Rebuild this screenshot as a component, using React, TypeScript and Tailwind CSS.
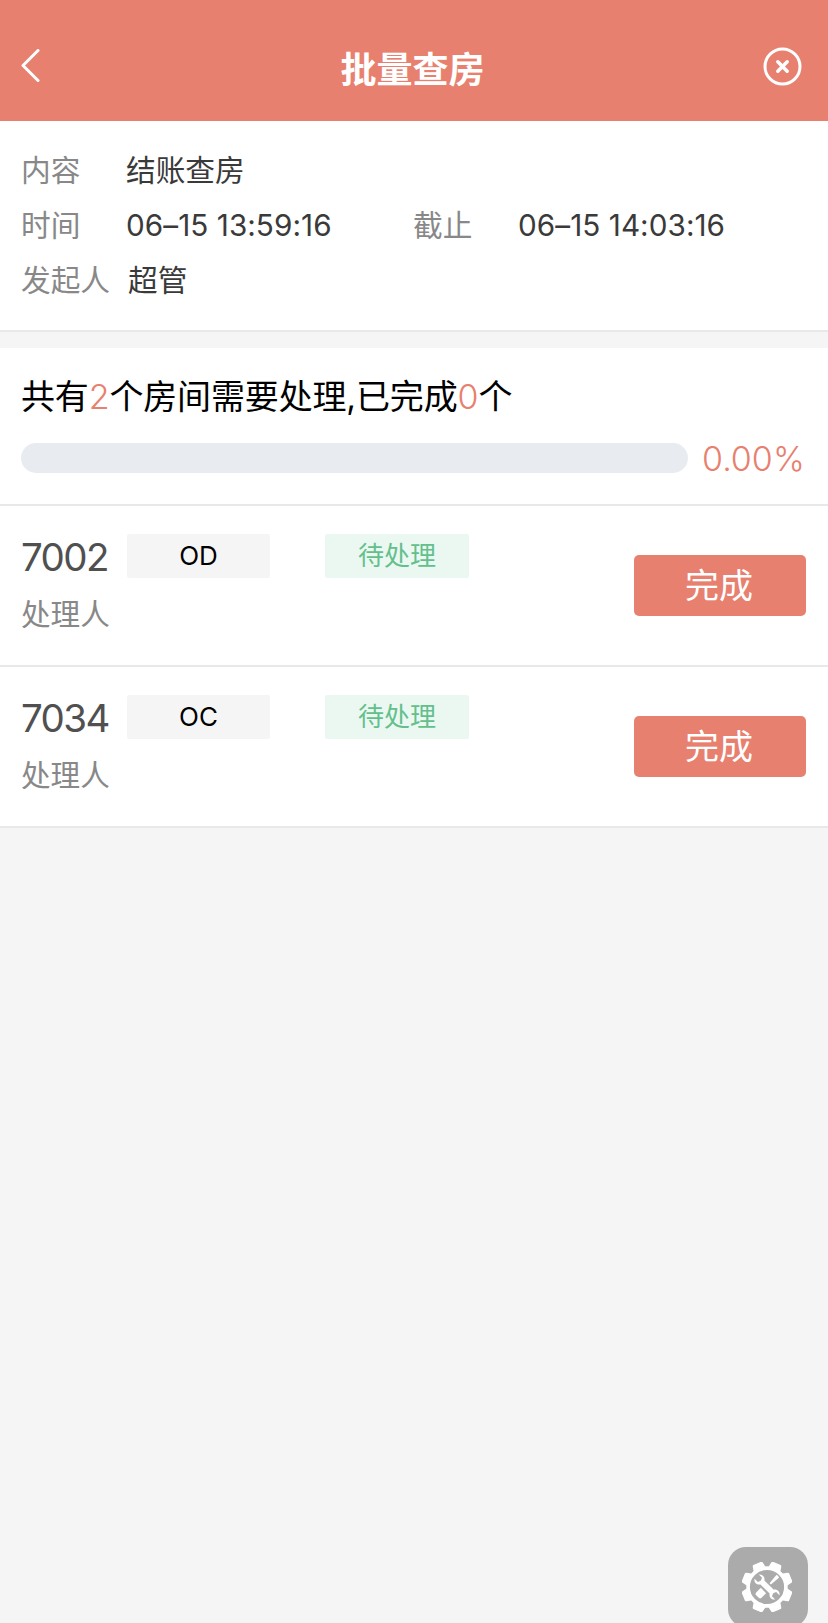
import clsx from "clsx";

type Room = {
  no: string;
  state: string;
  status: string;
};

const rooms: Room[] = [
  { no: "7002", state: "OD", status: "待处理" },
  { no: "7034", state: "OC", status: "待处理" },
];

const done = 0;

function Header() {
  return (
    <header className="flex h-[121px] items-center justify-between bg-[#e8806f] pt-[11px] pr-[26px] pl-[20px]">
      <button className="w-[42px]" aria-label="返回">
        <svg width="20" height="34" viewBox="0 0 20 34" fill="none">
          <path
            d="M18 1.5 3 16.5l15 15"
            stroke="#fff"
            strokeWidth="3"
            strokeLinecap="round"
            strokeLinejoin="round"
          />
        </svg>
      </button>
      <h1 className="pt-[8px] text-[36px] leading-none font-bold text-white">
        批量查房
      </h1>
      <button aria-label="关闭">
        <svg width="39" height="39" viewBox="0 0 39 39" fill="none">
          <circle cx="19.5" cy="19.5" r="17.5" stroke="#fff" strokeWidth="3" />
          <path
            d="m14.8 14.8 9.4 9.4m0-9.4-9.4 9.4"
            stroke="#fff"
            strokeWidth="3.5"
            strokeLinecap="round"
          />
        </svg>
      </button>
    </header>
  );
}

function InfoItem({
  label,
  value,
  className,
}: {
  label: string;
  value: string;
  className?: string;
}) {
  return (
    <div className={clsx("flex h-[55px] items-center", className)}>
      <span className="w-[105px] text-[#888888]">{label}</span>
      <span className="whitespace-nowrap text-[#3a3a3a]">{value}</span>
    </div>
  );
}

function RoomRow({ room }: { room: Room }) {
  return (
    <li className="flex h-[161px] items-start justify-between border-b-2 border-[#e8e8e8] bg-white pr-[22px] pl-[21px]">
      <div>
        <div className="mt-[28px] flex h-[44px] items-center">
          <span className="w-[106px] pt-[2px] text-[38.5px] leading-none tracking-[-1.6px] text-[#505050]">
            {room.no}
          </span>
          <span className="flex h-[44px] w-[143px] items-center justify-center rounded-[2px] bg-[#f5f5f5] pb-[2px] text-[26px] text-black">
            {room.state}
          </span>
          <span className="ml-[55px] flex h-[44px] w-[144px] items-center justify-center rounded-[2px] bg-[#ebf8f2] pb-[1px] text-[26px] text-[#63c08c]">
            {room.status}
          </span>
        </div>
        <div className="mt-[14px] text-[29.6px] leading-[44px] text-[#888888]">
          处理人
        </div>
      </div>
      <button className="mt-[49px] h-[61px] w-[172px] rounded-[5px] bg-[#e8806f] pt-[1px] pr-[2px] text-[34px] leading-none text-white">
        完成
      </button>
    </li>
  );
}

function GearIcon() {
  const teeth = [22.5, 67.5, 112.5, 157.5, 202.5, 247.5, 292.5, 337.5];

  return (
    <svg width="50" height="50" viewBox="-25 -25 50 50">
      {teeth.map((angle) => (
        <path
          key={angle}
          d="M-6.6-18.5-5.4-24.2Q-5.2-25.4-4.2-25.6h8.4q1 .2 1.2 1.4L6.6-18.5Z"
          fill="#fff"
          transform={`rotate(${angle})`}
        />
      ))}
      <circle r="18.9" fill="none" stroke="#fff" strokeWidth="3.6" />
      {/* screwdriver */}
      <g transform="rotate(45)" fill="#fff">
        <path d="M-1.7-15.5h3.4l.1 2-.9 9h-1.8l-.9-9Z" />
        <path d="M-3.8 5h7.6v6.5q0 2-2 2h-3.6q-2 0-2-2Z" />
      </g>
      {/* wrench */}
      <g transform="rotate(-45)">
        <path
          d="M-2.8-6.5C-6.2-8.6-5.8-13-3-14.6v4.6l3 1.2 3-1.2v-4.6C5.8-13 6.2-8.6 2.8-6.5V6.5C6.2 8.6 5.8 13 3 14.6V10L0 8.8l-3 1.2v4.6C-5.8 13-6.2 8.6-2.8 6.5Z"
          fill="#fff"
        />
      </g>
    </svg>
  );
}

export default function App() {
  const percent = (done / rooms.length) * 100;

  return (
    <main className="relative h-[1623px] w-[828px] overflow-hidden bg-[#f5f5f5] font-['Inter','Noto_Sans_CJK_SC',sans-serif]">
      <Header />

      {/* Task info */}
      <section className="h-[211px] border-b-2 border-[#e8e8e8] bg-white px-[21px] pt-[22px] text-[29.7px] leading-none">
        <InfoItem label="内容" value="结账查房" />
        <div className="flex tracking-[0.05px]">
          <InfoItem label="时间" value="06–15 13:59:16" className="w-[392px]" />
          <InfoItem label="截止" value="06–15 14:03:16" />
        </div>
        <InfoItem label="发起人" value="超管" className="gap-[2px]" />
      </section>

      {/* Progress */}
      <section className="mt-4 h-[158px] border-b-2 border-[#e8e8e8] bg-white px-[21px] pt-[24px]">
        <p className="text-[34px] leading-[50px] tracking-[-0.15px] text-black">
          共有<span className="font-light text-[#e8806f]">{rooms.length}</span>
          个房间需要处理,已完成
          <span className="font-light text-[#e8806f]">{done}</span>个
        </p>
        <div className="mt-[21px] flex h-[30px] items-center">
          <div className="h-[30px] w-[667px] overflow-hidden rounded-full bg-[#e8ebf0]">
            <div
              className="h-full bg-[#e8806f]"
              style={{ width: `${percent}%` }}
            />
          </div>
          <span className="ml-[14px] pt-[2px] text-[34px] leading-none font-light text-[#e8806f]">
            {percent.toFixed(2)}%
          </span>
        </div>
      </section>

      {/* Rooms */}
      <ul>
        {rooms.map((room) => (
          <RoomRow key={room.no} room={room} />
        ))}
      </ul>

      {/* Floating settings button */}
      <button
        className="absolute top-[1547px] left-[728px] flex h-[80px] w-[80px] items-center justify-center rounded-[18px] bg-[#ababab] pr-[2px]"
        aria-label="设置"
      >
        <GearIcon />
      </button>
    </main>
  );
}
